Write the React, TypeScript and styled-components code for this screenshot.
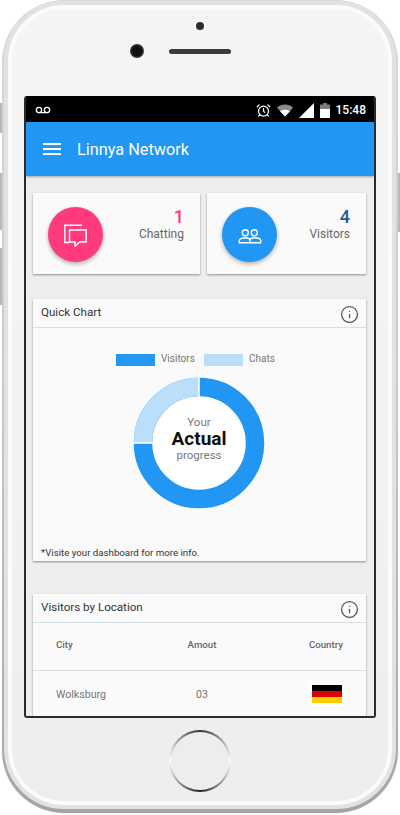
import React from 'react';
import styled, { createGlobalStyle } from 'styled-components';
import { AlarmClock, Info, Voicemail } from 'lucide-react';

const GlobalStyle = createGlobalStyle`
  html, body {
    margin: 0;
    padding: 0;
    background: #fff;
    font-family: Roboto, "Liberation Sans", sans-serif;
  }
  * { box-sizing: border-box; }
`;

function ChatIcon() {
  return (
    <svg width="24" height="24" viewBox="0 0 24 24" fill="none" stroke="#fff" strokeWidth="1.4">
      <path d="M18.2 2.3 H0.8 V19.5 H5" />
      <path d="M5.5 7 H22.2 V19 H15.5 L11 23.4 V19 H5.5 Z" />
    </svg>
  );
}

function PeopleIcon() {
  return (
    <svg width="24" height="24" viewBox="0 0 24 24" fill="none" stroke="#fff" strokeWidth="1.4">
      <circle cx="7.3" cy="9.7" r="3" />
      <circle cx="16.3" cy="9.7" r="3" />
      <path d="M1.3 19.7 V17.5 C1.3 15.5 5 14.7 7.5 14.7 C10 14.7 11.7 15.5 12 17 V19.7 Z" />
      <path d="M12 17 C12.3 15.5 14 14.7 16.5 14.7 C19 14.7 22.7 15.5 22.7 17.5 V19.7 H12" />
    </svg>
  );
}

function WifiIcon() {
  return (
    <svg width="16" height="13" viewBox="0 0 16 13">
      <path d="M0 3.8 C4.5 -0.6 11.5 -0.6 16 3.8 L8 12.5 Z" fill="#8a8a8a" />
      <path d="M3 7.2 C5.8 5.2 10.2 5.2 13 7.2 L8 12.5 Z" fill="#fff" />
    </svg>
  );
}

function SignalIcon() {
  return (
    <svg width="15" height="15" viewBox="0 0 15 15">
      <path d="M0 15 L15 0 V15 Z" fill="#fff" />
    </svg>
  );
}

function BatteryIcon() {
  return (
    <svg width="10" height="15" viewBox="0 0 10 15">
      <path d="M3 0 H7 V1.5 H10 V15 H0 V1.5 H3 Z" fill="#7d7d7d" />
      <rect y="6" width="10" height="9" fill="#fff" />
    </svg>
  );
}

function Flag() {
  return (
    <FlagBox>
      <FlagStripe $color="#000" />
      <FlagStripe $color="#dd0000" />
      <FlagStripe $color="#ffce00" />
    </FlagBox>
  );
}

export default function App() {
  return (
    <Page>
      <GlobalStyle />
      <SideButton $top={103} $height={30} />
      <SideButton $top={173} $height={57} />
      <SideButton $top={248} $height={57} />
      <SideButton $top={173} $height={59} $right />
      <Phone>
        <Face>
          <TopBezel>
            <FrontDot />
            <SensorRow>
              <Camera />
              <Speaker />
            </SensorRow>
          </TopBezel>
          <Screen>
            <StatusBar>
              <Voicemail size={16} color="#fff" strokeWidth={2} />
              <StatusIcons>
                <AlarmClock size={15} color="#fff" strokeWidth={2} />
                <WifiIcon />
                <SignalIcon />
                <BatteryIcon />
                <Clock>15:48</Clock>
              </StatusIcons>
            </StatusBar>
            <AppBar>
              <MenuButton>
                <MenuLine />
                <MenuLine />
                <MenuLine />
              </MenuButton>
              <AppTitle>Linnya Network</AppTitle>
            </AppBar>
            <Content>
              <StatRow>
                <StatCard>
                  <StatCircle $color="#ff3b7d">
                    <ChatIcon />
                  </StatCircle>
                  <StatText>
                    <StatNumber $color="#ff3b7d">1</StatNumber>
                    <StatLabel>Chatting</StatLabel>
                  </StatText>
                </StatCard>
                <StatCard>
                  <StatCircle $color="#2196f3">
                    <PeopleIcon />
                  </StatCircle>
                  <StatText>
                    <StatNumber $color="#1f5b96">4</StatNumber>
                    <StatLabel>Visitors</StatLabel>
                  </StatText>
                </StatCard>
              </StatRow>

              <ChartCard>
                <CardHeader>
                  <CardTitle>Quick Chart</CardTitle>
                  <Info size={19} color="#555" strokeWidth={1.6} />
                </CardHeader>
                <Legend>
                  <LegendSwatch $color="#2196f3" />
                  <LegendLabel>Visitors</LegendLabel>
                  <LegendSwatch $color="#bbdefb" />
                  <LegendLabel>Chats</LegendLabel>
                </Legend>
                <Donut>
                  <svg width="132" height="132" viewBox="0 0 132 132">
                    <circle cx="66" cy="66" r="47" fill="#fff" />
                    <circle cx="66" cy="66" r="56" fill="none" stroke="#2196f3" strokeWidth="18.5" />
                    <path d="M10 66 A56 56 0 0 1 66 10" fill="none" stroke="#bbdefb" strokeWidth="18.5" />
                    <path d="M66 0 V20 M0 66 H20" stroke="#fff" strokeWidth="1.6" />
                  </svg>
                  <DonutCenter>
                    <DonutSmall>Your</DonutSmall>
                    <DonutBig>Actual</DonutBig>
                    <DonutSmall>progress</DonutSmall>
                  </DonutCenter>
                </Donut>
                <ChartNote>*Visite your dashboard for more info.</ChartNote>
              </ChartCard>

              <LocationCard>
                <CardHeader>
                  <CardTitle>Visitors by Location</CardTitle>
                  <Info size={19} color="#555" strokeWidth={1.6} />
                </CardHeader>
                <TableHead>
                  <HeadCell>City</HeadCell>
                  <HeadCell $align="center">Amout</HeadCell>
                  <HeadCell $align="right">Country</HeadCell>
                </TableHead>
                <TableRow>
                  <BodyCell>Wolksburg</BodyCell>
                  <BodyCell $align="center">03</BodyCell>
                  <FlagCell>
                    <Flag />
                  </FlagCell>
                </TableRow>
              </LocationCard>
            </Content>
          </Screen>
          <BottomBezel>
            <HomeButton>
              <HomeInner />
            </HomeButton>
          </BottomBezel>
        </Face>
      </Phone>
    </Page>
  );
}

const Page = styled.div`
  position: relative;
  width: 400px;
  height: 815px;
  padding: 0 2px 2px;
  overflow: hidden;
  background: #fff;
`;

const SideButton = styled.div<{ $top: number; $height: number; $right?: boolean }>`
  position: absolute;
  top: ${p => p.$top}px;
  ${p => (p.$right ? 'right: 0;' : 'left: 0;')}
  width: 2px;
  height: ${p => p.$height}px;
  background: #b8b8b8;
`;

const Phone = styled.div`
  width: 396px;
  height: 813px;
  padding: 1px 2px 4px;
  border-radius: 62px;
  background: linear-gradient(#dadada, #c8c8c8 50%, #a4a4a4);
`;

const Face = styled.div`
  height: 100%;
  display: flex;
  flex-direction: column;
  align-items: center;
  border-radius: 60px;
  border: 4px solid #e2e2e2;
  background: linear-gradient(#f5f5f5, #f3f3f3 40%, #eceeee);
  box-shadow: inset 0 0 0 4px #fbfbfb;
`;

const TopBezel = styled.div`
  height: 91px;
  padding-top: 17px;
  display: flex;
  flex-direction: column;
  align-items: center;
`;

const FrontDot = styled.div`
  width: 8px;
  height: 8px;
  border-radius: 50%;
  background: #2e2e2e;
`;

const SensorRow = styled.div`
  display: flex;
  align-items: center;
  gap: 25px;
  margin-top: 14px;
  margin-left: -40px;
`;

const Camera = styled.div`
  width: 14px;
  height: 14px;
  border-radius: 50%;
  background: radial-gradient(circle, #111 45%, #3c3c3c 70%, #8a8a8a 100%);
`;

const Speaker = styled.div`
  width: 62px;
  height: 5px;
  border-radius: 3px;
  background: #3a3a3a;
`;

const Screen = styled.div`
  width: 352px;
  height: 622px;
  flex-shrink: 0;
  display: flex;
  flex-direction: column;
  overflow: hidden;
  border: 2px solid #2b2b2b;
  border-top-color: #000;
  border-radius: 3px;
  background: #eeeeee;
`;

const StatusBar = styled.div`
  height: 24px;
  flex-shrink: 0;
  display: flex;
  align-items: center;
  justify-content: space-between;
  padding: 0 8px 0 9px;
  background: #000;
`;

const StatusIcons = styled.div`
  display: flex;
  align-items: center;
  gap: 6px;
`;

const Clock = styled.span`
  color: #fff;
  font-size: 12px;
  font-weight: 500;
`;

const AppBar = styled.header`
  height: 54px;
  flex-shrink: 0;
  display: flex;
  align-items: center;
  gap: 16px;
  padding-left: 17px;
  background: #2196f3;
  box-shadow: 0 1px 2px rgba(0, 0, 0, 0.3);
`;

const MenuButton = styled.div`
  width: 18px;
  display: flex;
  flex-direction: column;
  gap: 3px;
`;

const MenuLine = styled.span`
  height: 2px;
  background: #fff;
`;

const AppTitle = styled.h1`
  margin: 0;
  color: #fff;
  font-size: 16.3px;
  font-weight: 400;
`;

const Content = styled.main`
  display: flex;
  flex-direction: column;
  padding: 17px 8px 0 7px;
`;

const StatRow = styled.div`
  display: grid;
  grid-template-columns: 167px 159px;
  gap: 7px;
`;

const StatCard = styled.div`
  height: 81px;
  display: flex;
  justify-content: space-between;
  padding: 14px 16px 0 15px;
  background: #fafafa;
  box-shadow: 0 1px 2px rgba(0, 0, 0, 0.4);
`;

const StatCircle = styled.div<{ $color: string }>`
  width: 55px;
  height: 55px;
  border-radius: 50%;
  display: flex;
  align-items: center;
  justify-content: center;
  background: ${p => p.$color};
  box-shadow: 0 2px 4px rgba(0, 0, 0, 0.3);
`;

const StatText = styled.div`
  display: flex;
  flex-direction: column;
  align-items: flex-end;
`;

const StatNumber = styled.span<{ $color: string }>`
  margin-top: -1px;
  color: ${p => p.$color};
  font-size: 18px;
  font-weight: 500;
  line-height: 21px;
`;

const StatLabel = styled.span`
  color: #666;
  font-size: 12px;
  line-height: 14px;
`;

const ChartCard = styled.section`
  height: 262px;
  margin-top: 25px;
  display: flex;
  flex-direction: column;
  background: #fafafa;
  box-shadow: 0 1px 2px rgba(0, 0, 0, 0.4);
`;

const CardHeader = styled.div`
  height: 29px;
  flex-shrink: 0;
  display: flex;
  align-items: center;
  justify-content: space-between;
  padding: 0 7.5px 0 8px;
  border-bottom: 1px solid #d5dfe6;

  svg {
    margin-top: 3px;
  }
`;

const CardTitle = styled.h2`
  margin: 0 0 3px;
  color: #333;
  font-size: 11.6px;
  font-weight: 400;
`;

const Legend = styled.div`
  display: flex;
  align-items: center;
  margin: 25px 0 0 83px;
  height: 14px;
`;

const LegendSwatch = styled.span<{ $color: string }>`
  width: 39px;
  height: 12px;
  background: ${p => p.$color};
`;

const LegendLabel = styled.span`
  width: 49px;
  padding-left: 6px;
  margin-top: -3px;
  color: #777;
  font-size: 10px;
`;

const Donut = styled.div`
  position: relative;
  width: 132px;
  height: 132px;
  margin: 10px 0 0 100px;
`;

const DonutCenter = styled.div`
  position: absolute;
  inset: 0;
  padding-bottom: 8px;
  display: flex;
  flex-direction: column;
  align-items: center;
  justify-content: center;
`;

const DonutSmall = styled.span`
  color: #777;
  font-size: 11.5px;
  line-height: 13px;
`;

const DonutBig = styled.span`
  color: #111;
  font-size: 19px;
  font-weight: 700;
  line-height: 20px;
`;

const ChartNote = styled.p`
  margin: auto 0 3px 8px;
  color: #333;
  font-size: 9.7px;
`;

const LocationCard = styled.section`
  margin-top: 33px;
  background: #fafafa;
  box-shadow: 0 1px 2px rgba(0, 0, 0, 0.4);
`;

const TableHead = styled.div`
  height: 48px;
  display: grid;
  grid-template-columns: 100px 92px 1fr;
  align-items: center;
  padding: 0 23px;
  border-bottom: 1px solid #d5dfe6;
`;

const TableRow = styled(TableHead)`
  height: 46px;
  border-bottom: 0;
`;

const HeadCell = styled.span<{ $align?: string }>`
  margin-top: -4px;
  color: #666;
  font-size: 9.7px;
  font-weight: 500;
  text-align: ${p => p.$align || 'left'};
`;

const BodyCell = styled.span<{ $align?: string }>`
  color: #777;
  font-size: 10.6px;
  text-align: ${p => p.$align || 'left'};
`;

const FlagCell = styled.div`
  display: flex;
  justify-content: flex-end;
`;

const FlagBox = styled.div`
  width: 36px;
  height: 24px;
  margin-right: -2px;
  padding: 3px;
  display: flex;
  flex-direction: column;
  background: #fff;
`;

const FlagStripe = styled.span<{ $color: string }>`
  flex: 1;
  background: ${p => p.$color};
`;

const BottomBezel = styled.div`
  flex: 1;
  display: flex;
  justify-content: center;
  padding-top: 12px;
`;

const HomeButton = styled.div`
  width: 62px;
  height: 62px;
  padding: 2px;
  border-radius: 50%;
  background: conic-gradient(#333, #aaa 50deg, #fff 90deg, #aaa 130deg, #222 180deg, #aaa 230deg, #fff 270deg, #aaa 310deg, #333);
`;

const HomeInner = styled.div`
  width: 100%;
  height: 100%;
  border-radius: 50%;
  background: #eceeee;
`;
